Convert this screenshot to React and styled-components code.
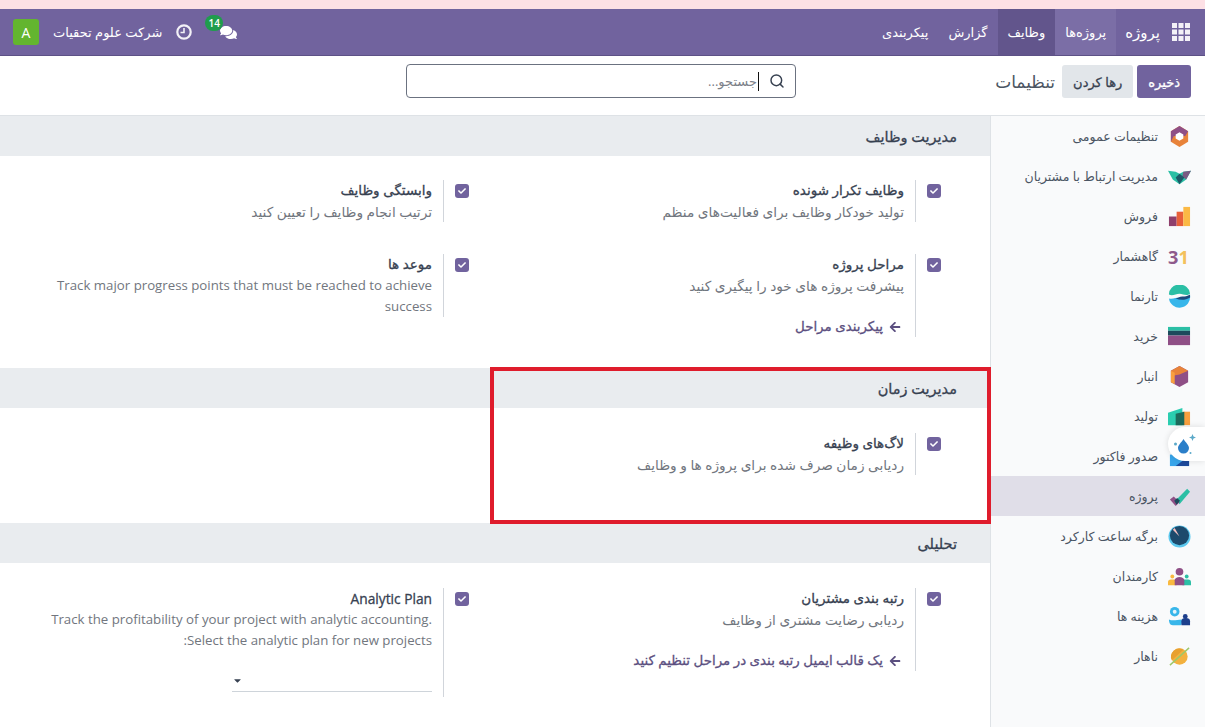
import React from 'react';
import styled, { createGlobalStyle } from 'styled-components';
import { FaComments, FaArrowLeft, FaCheck, FaCaretDown } from 'react-icons/fa';
import { Search } from 'lucide-react';

const GlobalStyle = createGlobalStyle`
  html, body {
    margin: 0;
    padding: 0;
    height: 100%;
    overflow: hidden;
    background: #fff;
    font-family: "Open Sans", "DejaVu Sans", sans-serif;
  }
`;

const Page = styled.div`
  position: relative;
  width: 1205px;
  height: 727px;
  overflow: hidden;
  display: flex;
  flex-direction: column;
`;
const PinkStrip = styled.div`
  height: 9px;
  background: #fde0e5;
`;
const NavBar = styled.div`
  height: 46px;
  background: #71639e;
  border-bottom: 1px solid #5d5186;
  direction: rtl;
  display: flex;
  align-items: stretch;
  color: #fff;
`;
const AppsButton = styled.div`
  display: flex;
  align-items: center;
  padding: 0 15px 0 12px;
`;
const Brand = styled.div`
  display: flex;
  align-items: center;
  font-size: 15px;
  padding-left: 9px;
`;
const MenuItem = styled.div`
  display: flex;
  align-items: center;
  padding: 0 10px;
  font-size: 13px;
  background: ${(p) => (p.$active ? '#62558c' : p.$hover ? '#7b6ea6' : 'transparent')};
`;
const NavSpacer = styled.div`
  flex: 1;
`;
const Systray = styled.div`
  display: flex;
  align-items: center;
  direction: ltr;
  padding-left: 13px;
`;
const Avatar = styled.div`
  width: 26px;
  height: 26px;
  border-radius: 3px;
  background: #63b52f;
  display: flex;
  align-items: center;
  justify-content: center;
  font-size: 14px;
  margin-right: 14px;
`;
const Company = styled.div`
  direction: rtl;
  font-size: 13px;
  margin-right: 14px;
`;
const ChatIcon = styled.div`
  position: relative;
  width: 18px;
  height: 20px;
  margin-left: 27px;
  display: flex;
  align-items: center;
  justify-content: center;
`;
const Badge = styled.span`
  position: absolute;
  top: -7px;
  left: -14px;
  min-width: 16px;
  height: 16px;
  padding: 0 1px;
  border-radius: 9px;
  background: #1f9d4d;
  font-size: 10px;
  font-weight: 600;
  line-height: 16px;
  text-align: center;
`;
const ControlPanel = styled.div`
  height: 50px;
  padding-top: 9px;
  background: #fff;
  border-bottom: 1px solid #dee2e6;
  direction: rtl;
  display: grid;
  grid-template-columns: 409px 390px 1fr;
  align-items: start;
`;
const ActionGroup = styled.div`
  display: flex;
  align-items: center;
  gap: 4px;
  padding-right: 14px;
`;
const Button = styled.div`
  height: 33px;
  padding: 0 11px;
  border-radius: 3px;
  display: flex;
  align-items: center;
  font-size: 13px;
  -webkit-text-stroke: 0.3px currentColor;
  background: ${(p) => (p.$primary ? '#71639e' : '#e2e6ea')};
  color: ${(p) => (p.$primary ? '#fff' : '#374151')};
`;
const PanelTitle = styled.div`
  font-size: 17px;
  color: #4b5563;
  margin-right: 3px;
`;
const SearchBox = styled.div`
  height: 34px;
  border: 1px solid #6b7280;
  border-radius: 4px;
  display: flex;
  align-items: center;
  box-sizing: border-box;
  margin-top: -1px;
`;
const SearchIconBox = styled.div`
  width: 36px;
  display: flex;
  justify-content: center;
  color: #374151;
`;
const SearchText = styled.div`
  font-size: 13px;
  color: #7b8088;
  border-right: 1px solid #111;
  padding-right: 1px;
  line-height: 19px;
`;
const Body = styled.div`
  flex: 1;
  display: flex;
  direction: rtl;
  min-height: 0;
`;
const Sidebar = styled.div`
  width: 215px;
  background: #f9fafb;
  border-left: 1px solid #dee2e6;
  box-sizing: border-box;
`;
const SideItem = styled.div`
  height: 40px;
  display: flex;
  align-items: center;
  padding-right: 14px;
  font-size: 12.5px;
  color: #4b5563;
  background: ${(p) => (p.$active ? '#e0dee8' : 'transparent')};
`;
const SideIcon = styled.svg`
  width: 23px;
  height: 23px;
  margin-left: 10px;
  flex: none;
`;
const Content = styled.div`
  flex: 1;
  min-width: 0;
`;
const SectionHeader = styled.div`
  height: 40px;
  background: #e9ecef;
  display: flex;
  align-items: center;
  padding-right: 33px;
  font-size: 14.5px;
  -webkit-text-stroke: 0.3px currentColor;
  color: #374151;
`;
const SettingGrid = styled.div`
  display: grid;
  grid-template-columns: 472px 472px;
  align-items: start;
  row-gap: 32px;
  padding: ${(p) => p.$padding};
`;
const Setting = styled.div`
  display: flex;
  align-items: flex-start;
`;
const CheckCell = styled.div`
  width: 74px;
  padding-top: 4px;
  padding-right: 49px;
  box-sizing: border-box;
  flex: none;
`;
const CheckBox = styled.div`
  width: 14px;
  height: 14px;
  border-radius: 3px;
  background: #71639e;
  color: #fff;
  display: flex;
  align-items: center;
  justify-content: center;
  font-size: 8px;
`;
const SettingBody = styled.div`
  border-right: 1px solid #d1d5db;
  padding-right: 11px;
  flex: 1;
  min-width: 0;
  padding-bottom: ${(p) => (p.$pad ? '5px' : '0')};
`;
const SettingTitle = styled.div`
  font-size: ${(p) => (p.$latin ? '13.75px' : '13.5px')};
  -webkit-text-stroke: 0.3px currentColor;
  color: #374151;
  line-height: 21px;
`;
const SettingText = styled.div`
  font-size: ${(p) => (p.$latin ? '13.25px' : '13.7px')};
  color: #71767e;
  line-height: 21px;
`;
const SettingLink = styled.div`
  margin-top: 20px;
  padding-right: 3px;
  font-size: 13.4px;
  -webkit-text-stroke: 0.3px currentColor;
  color: #5b4f80;
  line-height: 21px;
  display: flex;
  align-items: center;
  gap: 6px;
`;
const SelectLine = styled.div`
  margin-top: 18px;
  width: 200px;
  height: 23px;
  border-bottom: 1px solid #ced4da;
  display: flex;
  align-items: center;
  justify-content: flex-end;
  color: #374151;
  font-size: 11px;
  box-sizing: border-box;
`;
const Highlight = styled.div`
  position: absolute;
  left: 490px;
  top: 367px;
  width: 501px;
  height: 157px;
  border: 4px solid #df1c2c;
  box-sizing: border-box;
  pointer-events: none;
`;
const FloatWidget = styled.div`
  position: absolute;
  right: 0;
  top: 427px;
  width: 37px;
  height: 34px;
  background: #fff;
  border-radius: 17px 0 0 17px;
  box-shadow: 0 0 6px rgba(0, 0, 0, 0.12);
  display: flex;
  align-items: center;
  justify-content: center;
`;

const AppsIcon = () => (
  <svg width="18" height="18" viewBox="0 0 18 18" fill="#f3f1f7">
    {[0, 6.5, 13].map((y) =>
      [0, 6.5, 13].map((x) => <rect key={`${x}-${y}`} x={x} y={y} width="5" height="5" />)
    )}
  </svg>
);

const ClockIcon = () => (
  <svg width="16" height="16" viewBox="0 0 16 16" fill="none" stroke="#f3f1f7">
    <circle cx="8" cy="8" r="6.700" strokeWidth="2.200" />
    <path d="M8 4v4.500H4.500" strokeWidth="1.600" />
  </svg>
);

const icons = {
  general: (
    <>
      <path d="M12 1l9 5.500v11L12 23l-9-5.500v-11z" fill="#e8833a" />
      <path d="M12 1l9 5.500-3 5H6l-3 6v-11z" fill="#8f4f86" />
      <path d="M12 7.500l4 2.300v4.400l-4 2.300-4-2.300V9.800z" fill="#fff" />
    </>
  ),
  crm: (
    <>
      <path d="M0 6l8 1 4 2 4-2 8-1-5 9-7 5-7-5z" fill="#2bbfa5" />
      <path d="M16 7l8-1-5 9-4-3z" fill="#7a5a82" />
      <path d="M8 13l4-4 5 4-5 7z" fill="#1d5a68" />
    </>
  ),
  sales: (
    <>
      <rect x="1" y="12" width="8" height="10" fill="#8f3f6c" />
      <rect x="9" y="7" width="7" height="15" fill="#e8603a" />
      <rect x="16" y="2" width="7" height="20" fill="#fbb945" />
    </>
  ),
  calendar: (
    <>
      <text x="0" y="20" direction="ltr" fontFamily="Open Sans, sans-serif" fontSize="19" fontWeight="700" fill="#8f5a8c">3</text>
      <text x="11" y="20" direction="ltr" fontFamily="Open Sans, sans-serif" fontSize="19" fontWeight="700" fill="#f3c15c">1</text>
    </>
  ),
  website: (
    <>
      <path d="M1 10a11 10 0 0 1 22-1c-4 3-7 0-11 0S5 12 1 10z" fill="#2bbfa5" />
      <path d="M1 14c4 1 7-1 11-1s7 0 11-2a11 11 0 0 1-22 3z" fill="#38b6ea" />
      <path d="M8 14c2 0 4-2 7-2 3 0 5 0 8-2v3c-5 3-10 3-15 1z" fill="#1d4a7c" />
    </>
  ),
  purchase: (
    <>
      <rect x="0" y="2" width="23" height="4" fill="#2bbfa5" />
      <rect x="0" y="6" width="23" height="5" fill="#1d4a5c" />
      <rect x="0" y="11" width="23" height="10" fill="#8f4f86" />
    </>
  ),
  inventory: (
    <>
      <path d="M12 1l9 5v12l-9 5-9-5V6z" fill="#8f4f86" />
      <path d="M12 1l9 5-9 4-6 1-3-5z" fill="#e8833a" />
      <path d="M3 6l4 2v12l-4-2z" fill="#f9a03f" />
    </>
  ),
  manufacturing: (
    <>
      <path d="M15 7h8v14h-8z" fill="#f9a03f" />
      <path d="M0 8l15-5v18H0z" fill="#2bcdb0" />
      <path d="M8 9l9-2v14H8z" fill="#1d6a5c" />
    </>
  ),
  invoice: (
    <>
      <path d="M2 10h20v12H2z" fill="#38a5ea" />
      <path d="M8 22l8-6h6v6z" fill="#1d4a9c" />
    </>
  ),
  project: (
    <>
      <path d="M9 15L20 4l3 3-11 13z" fill="#2bbfa5" />
      <path d="M2 15l4-3 6 6-4 4z" fill="#8f4f86" />
      <path d="M6.500 16.500l3-3 3 3-3.500 4z" fill="#1d4a5c" />
    </>
  ),
  timesheet: (
    <>
      <circle cx="12" cy="12" r="11.500" fill="#5cc8ee" />
      <circle cx="12" cy="11" r="10" fill="#1d4a6c" />
      <path d="M12 12L5 5l2-2z" fill="#f6c0c0" />
    </>
  ),
  employees: (
    <>
      <circle cx="12" cy="7" r="4" fill="#8f4f86" />
      <circle cx="4.500" cy="12" r="2" fill="#f9b93f" />
      <circle cx="19.500" cy="12" r="2" fill="#2bbfa5" />
      <path d="M0 21v-3a3 3 0 0 1 3-3h6v6z" fill="#f9b93f" />
      <path d="M24 21v-3a3 3 0 0 0-3-3h-6v6z" fill="#2bbfa5" />
      <path d="M7 21v-5a5 3.500 0 0 1 10 0v5z" fill="#8f4f86" />
    </>
  ),
  expenses: (
    <>
      <circle cx="7" cy="7" r="5" fill="#38b6ea" />
      <circle cx="7" cy="7" r="2" fill="#e5f4fb" />
      <circle cx="18" cy="12" r="2.500" fill="#1d3f8c" />
      <path d="M1 15c4 2 9 0 13 0 1 0 1 6-1 6H5c-3 0-4-3-4-6z" fill="#38b6ea" />
      <path d="M14 21v-4a4 3 0 0 1 9 0v4z" fill="#1d3f8c" />
    </>
  ),
  lunch: (
    <>
      <circle cx="12" cy="12" r="8.500" fill="#f3b13f" />
      <path d="M4 16a8.500 8.500 0 0 1 12-11" fill="#e8a030" />
      <path d="M2 21L22 3" stroke="#9ec86a" strokeWidth="1.500" />
    </>
  ),
};

const sideItems = [
  ['general', 'تنظیمات عمومی'],
  ['crm', 'مدیریت ارتباط با مشتریان'],
  ['sales', 'فروش'],
  ['calendar', 'گاهشمار'],
  ['website', 'تارنما'],
  ['purchase', 'خرید'],
  ['inventory', 'انبار'],
  ['manufacturing', 'تولید'],
  ['invoice', 'صدور فاکتور'],
  ['project', 'پروژه'],
  ['timesheet', 'برگه ساعت کارکرد'],
  ['employees', 'کارمندان'],
  ['expenses', 'هزینه ها'],
  ['lunch', 'ناهار'],
];

function Option({ title, text, link, latinTitle, latinText, children }) {
  return (
    <Setting>
      <CheckCell>
        <CheckBox>
          <FaCheck />
        </CheckBox>
      </CheckCell>
      <SettingBody $pad={!!children}>
        <SettingTitle $latin={latinTitle}>{title}</SettingTitle>
        <SettingText $latin={latinText}>{text}</SettingText>
        {link && (
          <SettingLink>
            <FaArrowLeft size={12} />
            {link}
          </SettingLink>
        )}
        {children}
      </SettingBody>
    </Setting>
  );
}

export default function App() {
  return (
    <Page>
      <GlobalStyle />
      <PinkStrip />
      <NavBar>
        <AppsButton>
          <AppsIcon />
        </AppsButton>
        <Brand>پروژه</Brand>
        <MenuItem $hover>پروژه‌ها</MenuItem>
        <MenuItem $active>وظایف</MenuItem>
        <MenuItem>گزارش</MenuItem>
        <MenuItem>پیکربندی</MenuItem>
        <NavSpacer />
        <Systray>
          <Avatar>A</Avatar>
          <Company>شرکت علوم تحقیات</Company>
          <ClockIcon />
          <ChatIcon>
            <FaComments size={17} />
            <Badge>14</Badge>
          </ChatIcon>
        </Systray>
      </NavBar>
      <ControlPanel>
        <ActionGroup>
          <Button $primary>ذخیره</Button>
          <Button>رها کردن</Button>
          <PanelTitle>تنظیمات</PanelTitle>
        </ActionGroup>
        <SearchBox>
          <SearchIconBox>
            <Search size={16} strokeWidth={2.2} />
          </SearchIconBox>
          <SearchText>جستجو...</SearchText>
          <NavSpacer />
        </SearchBox>
      </ControlPanel>
      <Body>
        <Sidebar>
          {sideItems.map(([key, label]) => (
            <SideItem key={key} $active={key === 'project'}>
              <SideIcon viewBox="0 0 24 24">{icons[key]}</SideIcon>
              {label}
            </SideItem>
          ))}
        </Sidebar>
        <Content>
          <SectionHeader>مدیریت وظایف</SectionHeader>
          <SettingGrid $padding="24px 0 31px">
            <Option title="وظایف تکرار شونده" text="تولید خودکار وظایف برای فعالیت‌های منظم" />
            <Option title="وابستگی وظایف" text="ترتیب انجام وظایف را تعیین کنید" />
            <Option
              title="مراحل پروژه"
              text="پیشرفت پروژه های خود را پیگیری کنید"
              link="پیکربندی مراحل"
            />
            <Option
              title="موعد ها"
              latinText
              text="Track major progress points that must be reached to achieve success"
            />
          </SettingGrid>
          <SectionHeader>مدیریت زمان</SectionHeader>
          <SettingGrid $padding="25px 0 48px">
            <Option title="لاگ‌های وظیفه" text="ردیابی زمان صرف شده برای پروژه ها و وظایف" />
          </SettingGrid>
          <SectionHeader>تحلیلی</SectionHeader>
          <SettingGrid $padding="25px 0 0">
            <Option
              title="رتبه بندی مشتریان"
              text="ردیابی رضایت مشتری از وظایف"
              link="یک قالب ایمیل رتبه بندی در مراحل تنظیم کنید"
            />
            <Option
              title="Analytic Plan"
              latinTitle
              latinText
              text="Track the profitability of your project with analytic accounting. Select the analytic plan for new projects:"
            >
              <SelectLine>
                <FaCaretDown />
              </SelectLine>
            </Option>
          </SettingGrid>
        </Content>
      </Body>
      <Highlight />
      <FloatWidget>
        <svg width="30" height="26" viewBox="0 0 30 26">
          <path d="M11.500 8c2.500 4 5.500 6 5.500 9a5.500 5.500 0 0 1-11 0c0-3 3-5 5.500-9z" fill="#2b7fc9" />
          <path d="M20.500 3l1 2.500 2.500 1-2.500 1-1 2.500-1-2.500-2.500-1 2.500-1z" fill="#5ba9c9" />
          <circle cx="3.500" cy="13" r="1.500" fill="#5ba9c9" />
          <circle cx="18.500" cy="22" r="1" fill="#5ba9c9" />
        </svg>
      </FloatWidget>
    </Page>
  );
}
